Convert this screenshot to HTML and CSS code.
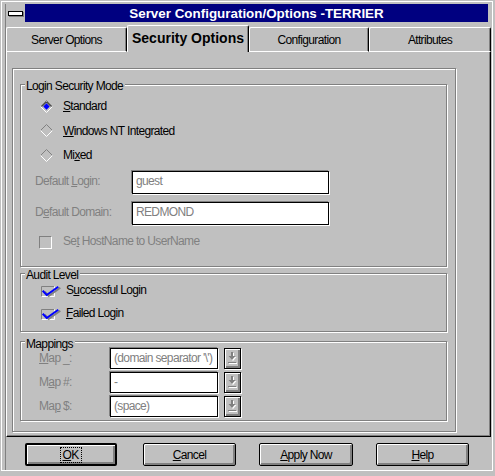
FILE: index.html
```html
<!DOCTYPE html>
<html>
<head>
<meta charset="utf-8">
<link rel="stylesheet" href="styles.css">
</head>
<body>
<div class="window">
  <div class="frame">
    <div class="client">
      <div class="titlebar">
        <div class="sysmenu"><span class="sysbar"></span></div>
        <div class="caption">Server Configuration/Options -TERRIER</div>
      </div>
      <div class="tabs">
        <div class="tab t1">Server Options</div>
        <div class="tab active t2">Security Options</div>
        <div class="tab t3">Configuration</div>
        <div class="tab t4">Attributes</div>
      </div>
      <div class="page">
        <div class="etched outer">
          <div class="etched group g1">
            <div class="legend">Login Security Mode</div>
            <div class="radios">
              <div class="radio-row">
                <svg class="radio" width="13" height="13" viewBox="0 0 13 13">
                  <path d="M0.5 6.5L6.5 0.5L12.5 6.5" stroke="#808080" fill="none"/>
                  <path d="M0.5 6.5L6.5 12.5L12.5 6.5" stroke="#fff" fill="none"/>
                  <path d="M1.9 6.5L6.5 1.9L11.1 6.5" stroke="#000" fill="none"/>
                  <path d="M6.5 3.3L9.7 6.5L6.5 9.7L3.3 6.5Z" fill="#0000ff"/>
                </svg>
                <span><u>S</u>tandard</span>
              </div>
              <div class="radio-row">
                <svg class="radio" width="13" height="13" viewBox="0 0 13 13">
                  <path d="M0.5 6.5L6.5 0.5L12.5 6.5" stroke="#808080" fill="none"/>
                  <path d="M0.5 6.5L6.5 12.5L12.5 6.5" stroke="#fff" fill="none"/>
                </svg>
                <span><u>W</u>indows NT Integrated</span>
              </div>
              <div class="radio-row">
                <svg class="radio" width="13" height="13" viewBox="0 0 13 13">
                  <path d="M0.5 6.5L6.5 0.5L12.5 6.5" stroke="#808080" fill="none"/>
                  <path d="M0.5 6.5L6.5 12.5L12.5 6.5" stroke="#fff" fill="none"/>
                </svg>
                <span>Mi<u>x</u>ed</span>
              </div>
            </div>
            <div class="field-row login-row">
              <div class="label">Default <u>L</u>ogin:</div>
              <div class="field wide">guest</div>
            </div>
            <div class="field-row domain-row">
              <div class="label">D<u>e</u>fault Domain:</div>
              <div class="field wide">REDMOND</div>
            </div>
            <div class="check-row">
              <span class="box"></span>
              <span class="dim">Se<u>t</u> HostName to UserName</span>
            </div>
          </div>

          <div class="etched group g2">
            <div class="legend">Audit Level</div>
            <div class="audit-row first">
              <svg class="check" width="22" height="14" viewBox="0 0 22 14">
                <path d="M1.5 13V2.5H14" stroke="#808080" fill="none"/>
                <path d="M1.5 12.5H14.5V2.5" stroke="#fff" fill="none"/>
                <polyline points="4.7,7.7 8.7,12 20.3,3.7" stroke="#808080" stroke-width="2" fill="none"/>
                <polyline points="2.7,6.7 6.7,11 18.3,2.7" stroke="#0000ff" stroke-width="2" fill="none"/>
              </svg>
              <span>S<u>u</u>ccessful Login</span>
            </div>
            <div class="audit-row">
              <svg class="check" width="22" height="14" viewBox="0 0 22 14">
                <path d="M1.5 13V2.5H14" stroke="#808080" fill="none"/>
                <path d="M1.5 12.5H14.5V2.5" stroke="#fff" fill="none"/>
                <polyline points="4.7,7.7 8.7,12 20.3,3.7" stroke="#808080" stroke-width="2" fill="none"/>
                <polyline points="2.7,6.7 6.7,11 18.3,2.7" stroke="#0000ff" stroke-width="2" fill="none"/>
              </svg>
              <span><u>F</u>ailed Login</span>
            </div>
          </div>

          <div class="etched group g3">
            <div class="legend legend3">Mappings</div>
            <div class="map-row">
              <div class="map-label"><u>M</u>ap _:</div>
              <div class="field narrow">(domain separator '\')</div>
              <div class="drop">
                <svg width="11" height="13" viewBox="0 0 11 13">
                  <path d="M5 1h2v4h2.5L6 9 2.5 5H5z" fill="#fff"/>
                  <path d="M4 0h2v4h2.5L5 8 1.5 4H4z" fill="#808080"/>
                  <rect x="2" y="11" width="8" height="1" fill="#fff"/>
                  <rect x="1" y="10" width="8" height="1" fill="#808080"/>
                </svg>
              </div>
            </div>
            <div class="map-row">
              <div class="map-label">M<u>a</u>p #:</div>
              <div class="field narrow">-</div>
              <div class="drop">
                <svg width="11" height="13" viewBox="0 0 11 13">
                  <path d="M5 1h2v4h2.5L6 9 2.5 5H5z" fill="#fff"/>
                  <path d="M4 0h2v4h2.5L5 8 1.5 4H4z" fill="#808080"/>
                  <rect x="2" y="11" width="8" height="1" fill="#fff"/>
                  <rect x="1" y="10" width="8" height="1" fill="#808080"/>
                </svg>
              </div>
            </div>
            <div class="map-row">
              <div class="map-label">Ma<u>p</u> $:</div>
              <div class="field narrow">(space)</div>
              <div class="drop">
                <svg width="11" height="13" viewBox="0 0 11 13">
                  <path d="M5 1h2v4h2.5L6 9 2.5 5H5z" fill="#fff"/>
                  <path d="M4 0h2v4h2.5L5 8 1.5 4H4z" fill="#808080"/>
                  <rect x="2" y="11" width="8" height="1" fill="#fff"/>
                  <rect x="1" y="10" width="8" height="1" fill="#808080"/>
                </svg>
              </div>
            </div>
          </div>
        </div>
      </div>
      <div class="buttons">
        <div class="btn btn-ok"><span class="focus"><u>O</u>K</span></div>
        <div class="btn btn-cancel"><u>C</u>ancel</div>
        <div class="btn btn-apply"><u>A</u>pply Now</div>
        <div class="btn btn-help"><u>H</u>elp</div>
      </div>
    </div>
  </div>
</div>
</body>
</html>
```

FILE: styles.css
```css
* { box-sizing: border-box; }

body {
  margin: 0;
  background: #c0c0c0;
  font-family: "Liberation Sans", Arial, sans-serif;
  font-size: 12px;
  letter-spacing: -0.65px;
  color: #000;
}

u { text-decoration: underline; text-underline-offset: 1px; }

.window {
  width: 495px;
  height: 476px;
  border-style: solid;
  border-color: #c0c0c0;
  border-width: 1px 2px 5px 1px;
}

.frame {
  height: 100%;
  border: 1px solid #fff;
  padding: 2px 1px 0 3px;
}

.client {
  height: 100%;
  border-left: 1px solid #808080;
  display: flex;
  flex-direction: column;
}

/* Title bar */
.titlebar {
  display: flex;
  height: 18px;
  margin-right: 3px;
}

.sysmenu {
  width: 19px;
  background: #c0c0c0;
}

.sysbar {
  display: block;
  width: 15px;
  height: 5px;
  margin: 7px 0 0 2px;
  border: 1px solid #000;
  background: #fff;
  box-shadow: 1px 1px 0 #808080;
}

.caption {
  flex: 1;
  background: #000080;
  color: #fff;
  font-weight: bold;
  font-size: 13.4px;
  letter-spacing: 0;
  text-align: center;
  line-height: 20px;
  overflow: hidden;
  white-space: nowrap;
}

/* Tabs */
.tabs {
  display: flex;
  height: 30px;
  align-items: flex-end;
}

.tab {
  height: 25px;
  border-left: 1px solid #fff;
  border-top: 1px solid #fff;
  border-right: 1px solid #000;
  border-bottom: 1px solid #fff;
  border-top-left-radius: 2px;
  border-top-right-radius: 2px;
  box-shadow: inset -1px 0 0 #808080;
  text-align: center;
  padding-top: 5px;
  line-height: 14px;
  white-space: nowrap;
}

.tab.active {
  height: 27px;
  border-bottom: none;
  font-weight: bold;
  font-size: 14px;
  letter-spacing: 0;
  padding-top: 4px;
  line-height: 16px;
}

.t1 { width: 121px; }
.t2 { width: 122px; }
.t3 { width: 120px; }
.t4 { width: 122px; }

/* Tab page */
.page {
  height: 385px;
  border-left: 1px solid #fff;
  border-right: 1px solid #000;
  border-bottom: 1px solid #000;
  box-shadow: inset -1px -1px 0 #808080;
  padding: 16px 0 0 5px;
}

.etched {
  border: 1px solid #808080;
  box-shadow: inset 1px 1px 0 #fff, 1px 1px 0 #fff;
}

.outer {
  width: 444px;
  height: 364px;
  padding: 15px 0 0 7px;
}

.group { width: 427px; }
.g1 { height: 183px; }
.g2 { height: 59px; margin-top: 6px; }
.g3 { height: 80px; margin-top: 9px; }

.legend {
  width: fit-content;
  margin: -6px 0 0 4px;
  padding: 0 2px 0 1px;
  background: #c0c0c0;
  line-height: 14px;
  white-space: nowrap;
}

.legend3 {
  margin-top: -5px;
  margin-bottom: -3px;
}

/* Radios */
.radios {
  display: flex;
  flex-direction: column;
  gap: 10.6px;
  margin-top: 6px;
}

.radio-row {
  display: flex;
  align-items: center;
  height: 14px;
  line-height: 14px;
  padding-left: 19px;
}

.radio { margin-right: 10px; flex: none; }

/* Text fields */
.field-row {
  display: flex;
  height: 23px;
  padding-left: 14px;
}

.login-row { margin-top: 8.8px; }
.domain-row { margin-top: 8px; }

.label {
  width: 97px;
  padding-top: 3px;
  line-height: 14px;
  color: #808080;
  white-space: nowrap;
}

.field {
  height: 100%;
  border: 1px solid #000;
  box-shadow: 1px 1px 0 #fff, -1px -1px 0 #808080;
  background: #fff;
  color: #808080;
  padding: 2px 0 0 3px;
  line-height: 14px;
  white-space: nowrap;
  overflow: hidden;
}

.wide { width: 197px; }
.narrow { width: 108px; }

.check-row {
  display: flex;
  height: 15px;
  line-height: 14px;
  padding-left: 18px;
  margin-top: 9px;
}

.box {
  width: 13px;
  height: 13px;
  margin: 2px 11px 0 0;
  border: 1px solid;
  border-color: #808080 #fff #fff #808080;
  flex: none;
}

.dim { color: #808080; white-space: nowrap; }

/* Audit */
.audit-row {
  display: flex;
  height: 14px;
  line-height: 14px;
  padding-left: 19px;
  margin-top: 9px;
}

.audit-row.first { margin-top: 1px; }

.check {
  flex: none;
  margin: 1px 4px 0 0;
}

/* Mappings */
.map-row {
  display: flex;
  height: 21px;
  padding-left: 18px;
  margin-bottom: 3px;
}

.map-label {
  width: 71px;
  padding-top: 3px;
  line-height: 14px;
  color: #808080;
  white-space: nowrap;
}

.drop {
  width: 17px;
  height: 21px;
  margin-left: 6px;
  border: 1px solid #000;
  background: #c0c0c0;
  box-shadow: inset 1px 1px 0 #fff, inset -2px -2px 0 #808080, 1px 1px 0 #fff;
  display: flex;
  align-items: flex-start;
  justify-content: center;
  padding-top: 3px;
}

/* Buttons */
.buttons {
  display: flex;
  gap: 23px;
  padding: 6px 0 0 19px;
}

.btn {
  width: 93px;
  height: 23px;
  border: 1px solid #000;
  border-radius: 2px;
  background: #c0c0c0;
  box-shadow: inset 1px 1px 0 #fff, inset -2px -2px 0 #808080;
  display: flex;
  align-items: center;
  justify-content: center;
  line-height: 14px;
  white-space: nowrap;
}

.btn-ok {
  width: 92px;
  margin-right: 3px;
  border-width: 2px;
}

.btn-apply { width: 94px; }

.focus {
  outline: 1px dotted #000;
  padding: 0 2px 0 1px;
}
```
